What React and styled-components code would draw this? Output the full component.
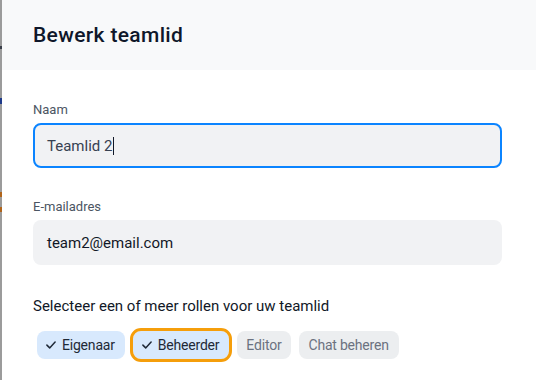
import React from "react";
import styled, { createGlobalStyle } from "styled-components";

const Global = createGlobalStyle`
  html, body { margin: 0; padding: 0; }
  body {
    background: #9b9b9b;
    font-family: Roboto, "Noto Sans", sans-serif;
    -webkit-font-smoothing: antialiased;
  }
`;

const Backdrop = styled.div`
  display: flex;
  height: 380px;
  overflow: hidden;
  background: linear-gradient(
    to bottom,
    #9b9b9b 0 46px, #3a3f4a 46px 49px, #9b9b9b 49px 98px,
    #1e3a8a 98px 104px, #9b9b9b 104px 192px, #b0641a 192px 197px,
    #9b9b9b 197px 207px, #b0641a 207px 212px, #9b9b9b 212px
  );
  padding-left: 2px;
`;

const Modal = styled.div`
  flex: 1;
  background: #ffffff;
  border-top-left-radius: 6px;
  display: flex;
  flex-direction: column;
`;

const Header = styled.div`
  height: 70px;
  background: #f8f9fa;
  display: flex;
  align-items: center;
  padding: 0 31px;
  box-sizing: border-box;
`;

const Title = styled.h2`
  margin: 0;
  font-size: 21px;
  font-weight: 500;
  color: #0f172a;
  letter-spacing: 0.35px;
`;

const Body = styled.div`
  padding: 32px 31px 0;
  display: flex;
  flex-direction: column;
  gap: 31px;
`;

const Field = styled.div`
  display: flex;
  flex-direction: column;
  gap: 5px;
`;

const Label = styled.label`
  font-size: 13px;
  line-height: 16px;
  color: #4b5563;
`;

const InputBox = styled.div`
  width: 469px;
  height: 45px;
  box-sizing: border-box;
  border-radius: 8px;
  background: #f1f2f4;
  border: 2px solid ${(p) => (p.$focused ? "#0b84ff" : "transparent")};
  display: flex;
  align-items: center;
  padding: 0 12px;
  font-size: 15px;
  color: ${(p) => (p.$focused ? "#374151" : "#111827")};
`;

const Caret = styled.span`
  display: inline-block;
  width: 1px;
  height: 18px;
  background: #111827;
  margin-left: 1px;
`;

const Roles = styled.div`
  display: flex;
  flex-direction: column;
  gap: 15px;
`;

const Prompt = styled.p`
  margin: 0;
  font-size: 15px;
  line-height: 20px;
  color: #111827;
`;

const ChipRow = styled.div`
  display: flex;
  gap: 8px;
  padding-left: 4px;
`;

const Chip = styled.button`
  height: 28px;
  box-sizing: border-box;
  border: none;
  border-radius: 8px;
  padding: 0 10px 0 9px;
  display: flex;
  align-items: center;
  gap: 6px;
  font-family: inherit;
  font-size: 14px;
  letter-spacing: -0.2px;
  background: ${(p) => (p.$selected ? "#d8e9fd" : "#eceef0")};
  color: ${(p) => (p.$selected ? "#1f2937" : "#6b7280")};
  outline: ${(p) => (p.$focused ? "3px solid #f59e0b" : "none")};
  outline-offset: 0;
  cursor: pointer;
`;

const CheckMark = () => (
  <svg width="10" height="8" viewBox="0 0 10 8" fill="none">
    <path
      d="M0.9 4.1 L3.7 6.9 L9.1 1.1"
      stroke="#1f2937"
      strokeWidth="1.5"
      strokeLinecap="round"
      strokeLinejoin="round"
    />
  </svg>
);

const roles = [
  { name: "Eigenaar", selected: true },
  { name: "Beheerder", selected: true, focused: true },
  { name: "Editor" },
  { name: "Chat beheren" },
];

export default function App() {
  return (
    <>
      <Global />
      <Backdrop>
        <Modal>
          <Header>
            <Title>Bewerk teamlid</Title>
          </Header>
          <Body>
            <Field>
              <Label>Naam</Label>
              <InputBox $focused>
                Teamlid 2<Caret />
              </InputBox>
            </Field>
            <Field>
              <Label>E-mailadres</Label>
              <InputBox>team2@email.com</InputBox>
            </Field>
            <Roles>
              <Prompt>Selecteer een of meer rollen voor uw teamlid</Prompt>
              <ChipRow>
                {roles.map((r) => (
                  <Chip key={r.name} $selected={r.selected} $focused={r.focused}>
                    {r.selected && <CheckMark />}
                    {r.name}
                  </Chip>
                ))}
              </ChipRow>
            </Roles>
          </Body>
        </Modal>
      </Backdrop>
    </>
  );
}
